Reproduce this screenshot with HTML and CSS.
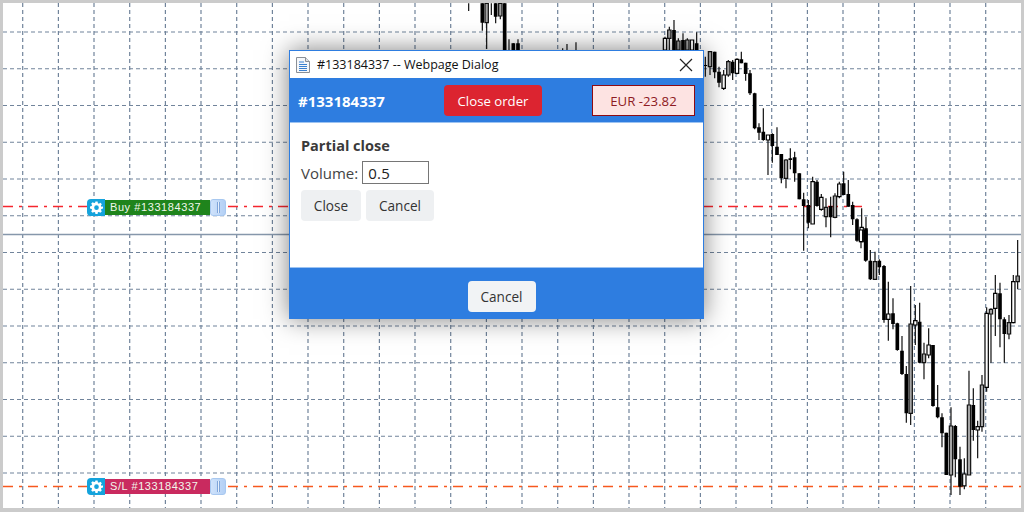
FILE: index.html
```html
<!DOCTYPE html>
<html lang="en">
<head>
<meta charset="utf-8">
<title>#133184337 -- Webpage Dialog</title>
<link rel="stylesheet" href="styles.css">
</head>
<body>
<div class="screen">
  <svg class="chart" viewBox="0 0 1024 512" width="1024" height="512" aria-hidden="true">
    <path class="grid" d="M3 32H1024M3 68.75H1024M3 105.5H1024M3 142.25H1024M3 179H1024M3 215.75H1024M3 252.5H1024M3 289.25H1024M3 326H1024M3 362.75H1024M3 399.5H1024M3 436.25H1024M3 473H1024"/>
    <path class="grid" d="M22.7 3V512M58.4 3V512M94 3V512M129.7 3V512M165.4 3V512M201 3V512M236.7 3V512M272.4 3V512M308 3V512M343.7 3V512M379.4 3V512M415 3V512M450.7 3V512M486.4 3V512M522 3V512M557.7 3V512M593.4 3V512M629 3V512M664.7 3V512M700.4 3V512M736 3V512M771.7 3V512M807.4 3V512M843 3V512M878.7 3V512M914.4 3V512M950 3V512M985.7 3V512"/>
    <path class="level-gray" d="M3 234.500H1024"/>
    <path class="level-red" d="M3 206.500H862"/>
    <path class="level-orange" d="M3 486.500H1024"/>

    <g transform="translate(460 0) scale(.3333)">
      <path class="wick" d="M26 10V33M67 10V92M80 10V147M94 10V45M107 10V70M121 10V58M134 10V147M147 118V150M160 130V150M174 118V150M308 145V150M321 132V150M348 127V150"/>
      <path class="body-black" d="M67 10V68M107 10V50M134 10V150M160 130V150M174 130V150"/>
      <path class="body-gray" d="M75 10h10v58h-10zM116 10h10v38h-10z"/>
    </g>
    <g transform="translate(650 15) scale(.3333)">
      <path class="wick" d="M45 65V105M58 35V105M72 15V105M85 70V105M99 55V105M112 70V105M126 75V105M140 52V105"/>
      <path class="body-black" d="M72 45V105M99 75V105M140 85V105"/>
      <path class="body-white" d="M40 70h10v35h-10zM121 75h10v30h-10z"/>
      <path class="body-gray" d="M53 45h10v25h-10zM80 78h10v27h-10zM107 75h10v30h-10z"/>
    </g>
    <g transform="translate(700 40) scale(.3333)">
      <path class="wick" d="M16 50V110M30 35V105M44 35V115M57 80V142M71 90V150M85 60V110M98 60V120M111 55V103M124 35V70M137 68V122M150 90V165M164 158V268M177 250V300M190 205V302M204 285V405M217 280V368M231 262V345M244 342V430M258 358V445M271 325V388M284 335V425M298 400V478M311 458V632M325 480V565M338 410V552M351 420V500M364 462V512M378 475V562M392 470V592M405 460V535M418 425V475M431 395V465M445 420V500M458 485V555M471 535V605M485 505V605M498 530V660"/>
      <path class="body-black" d="M16 75V78M44 35V97M57 95V128M98 65V100M124 58V70M137 68V102M150 100V160M164 160V265M177 262V278M190 275V300M217 282V318M231 320V345M244 342V415M271 355V360M284 352V400M298 400V478M311 478V498M325 495V548M351 425V498M392 498V532M431 430V465M445 462V500M458 495V538M471 538V602M498 565V660"/>
      <path class="body-white" d="M66 105h10v40h-10zM106 58h10v42h-10zM199 285h10v15h-10zM333 425h10v127h-10zM359 472h10v36h-10zM413 432h10v38h-10zM480 562h10v43h-10z"/>
      <path class="body-gray" d="M25 35h10v45h-10zM80 65h10v40h-10zM253 360h10v55h-10zM373 502h10v28h-10zM400 468h10v64h-10z"/>
    </g>
    <g transform="translate(860 230) scale(.3333)">
      <path class="wick" d="M3 0V55M17 0V95M31 60V150M45 65V150M58 88V135M72 105V278M85 155V332M99 205V298M112 278V362M126 318V435M139 408V578M152 168V585M166 225V345M179 218V400M192 338V448M206 295V385M219 345V530M233 465V565M246 550V652M259 608V735M273 532V795M286 585V742M300 650V795M313 685V778M327 422V735M340 475V632M353 572V685M366 435V605M380 232V485M393 235V398M406 135V318M420 158V352M433 262V398M447 255V328M460 135V280M473 30V178"/>
      <path class="body-black" d="M17 0V92M31 92V148M58 92V112M72 108V270M99 250V282M112 280V360M126 362V432M139 432V550M179 275V398M219 345V528M233 532V562M246 562V610M259 608V735M286 588V688M300 688V770M340 525V600M420 190V268M433 268V312"/>
      <path class="body-white" d="M-2 0h10v35h-10zM80 252h10v16h-10zM161 272h10v13h-10zM201 345h10v30h-10zM308 732h10v36h-10zM348 590h10v10h-10zM375 250h10v222h-10zM401 190h10v45h-10zM455 155h10v123h-10z"/>
      <path class="body-gray" d="M40 95h10v53h-10zM147 282h10v268h-10zM187 372h10v26h-10zM268 588h10v147h-10zM322 525h10v210h-10zM361 465h10v125h-10zM388 238h10v14h-10zM442 278h10v34h-10zM468 138h10v17h-10z"/>
    </g>
  </svg>

  <div class="tag tag-buy">
    <span class="tag-gear">
      <svg viewBox="0 0 24 24" width="13" height="13" aria-hidden="true"><path class="gear" fill-rule="evenodd" d="M10 1h4l.6 3.1 1.9.8 2.6-1.8 2.8 2.8-1.8 2.6.8 1.9L24 10v4l-3.1.6-.8 1.9 1.8 2.6-2.8 2.8-2.6-1.8-1.9.8L14 24h-4l-.6-3.1-1.9-.8-2.6 1.8-2.8-2.8 1.8-2.6-.8-1.9L0 14v-4l3.1-.6.8-1.9L2.100 4.900l2.800-2.800 2.600 1.800 1.900-.8zM12 8a4.300 4.300 0 1 0 0 8.600A4.300 4.300 0 0 0 12 8z"/></svg>
    </span>
    <span class="tag-label">Buy #133184337</span>
    <span class="tag-handle"><i></i></span>
  </div>

  <div class="tag tag-sl">
    <span class="tag-gear">
      <svg viewBox="0 0 24 24" width="13" height="13" aria-hidden="true"><path class="gear" fill-rule="evenodd" d="M10 1h4l.6 3.1 1.9.8 2.6-1.8 2.8 2.8-1.8 2.6.8 1.9L24 10v4l-3.1.6-.8 1.9 1.8 2.6-2.8 2.8-2.6-1.8-1.9.8L14 24h-4l-.6-3.1-1.9-.8-2.6 1.8-2.8-2.8 1.8-2.6-.8-1.9L0 14v-4l3.1-.6.8-1.9L2.100 4.900l2.800-2.800 2.600 1.800 1.900-.8zM12 8a4.300 4.300 0 1 0 0 8.600A4.300 4.300 0 0 0 12 8z"/></svg>
    </span>
    <span class="tag-label">S/L #133184337</span>
    <span class="tag-handle"><i></i></span>
  </div>

  <section class="dialog">
    <div class="titlebar">
      <svg class="doc-icon" viewBox="0 0 16 18" width="16" height="18" aria-hidden="true">
        <path class="doc-sheet" d="M1.500 1.500h9l4 4v11h-13z"/>
        <path class="doc-fold" d="M10.500 1.500v4h4"/>
        <path class="doc-lines" d="M4 6h5M4 8.500h8M4 10.500h8M4 12.500h8M4 14.500h8"/>
      </svg>
      <span class="title-text">#133184337 -- Webpage Dialog</span>
      <svg class="close-x" viewBox="0 0 14 14" width="14" height="14" aria-hidden="true"><path d="M1 1L13 13M13 1L1 13"/></svg>
    </div>
    <header class="head">
      <strong class="ticket">#133184337</strong>
      <button class="btn-danger">Close order</button>
      <span class="profit">EUR -23.82</span>
    </header>
    <div class="content">
      <h2 class="section-title">Partial close</h2>
      <div class="field">
        <label class="field-label" for="vol">Volume:</label>
        <input class="field-input" id="vol" value="0.5">
      </div>
      <div class="actions">
        <button class="btn-light btn-close">Close</button>
        <button class="btn-light btn-cancel">Cancel</button>
      </div>
    </div>
    <footer class="foot">
      <button class="btn-foot">Cancel</button>
    </footer>
  </section>
</div>
</body>
</html>
```
FILE: styles.css
```css
* { box-sizing: border-box; }
html, body { margin: 0; padding: 0; }
body { width: 1024px; height: 512px; overflow: hidden; background: #fff; font-family: "Open Sans", "Liberation Sans", sans-serif; }

.screen { position: relative; width: 1024px; height: 512px; border: solid #cbcbcb; border-width: 3px 3px 4px 3px; overflow: hidden; background: #fff; }
.chart { position: absolute; left: -3px; top: -3px; display: block; }

.grid { fill: none; stroke: #71849b; stroke-width: 1.2; stroke-dasharray: 4 3; }
.level-gray { fill: none; stroke: #8697ab; stroke-width: 1.5; }
.level-red { fill: none; stroke: #f5262e; stroke-width: 1.6; stroke-dasharray: 10 6 3 6; }
.level-orange { fill: none; stroke: #f7581e; stroke-width: 1.6; stroke-dasharray: 10 6 3 6; }
.wick { fill: none; stroke: #111; stroke-width: 3.6; }
.body-black { fill: none; stroke: #000; stroke-width: 11; }
.body-white { fill: #fff; stroke: #000; stroke-width: 3.6; }
.body-gray { fill: #a4a4a4; stroke: #111; stroke-width: 3.6; }

.tag { position: absolute; left: 84px; display: flex; height: 17px; width: 139px; font-family: "Liberation Sans", sans-serif; font-size: 11px; line-height: 15px; color: #f2f7ec; }
.tag-buy { top: 196px; }
.tag-sl { top: 475px; }
.tag-gear { flex: 0 0 18px; display: flex; align-items: center; justify-content: center; background: #14a3dc; border-radius: 4px 0 0 4px; }
.gear { fill: #fff; }
.tag-label { flex: 0 0 105px; margin: 1px 0; padding-left: 5px; letter-spacing: .58px; white-space: nowrap; }
.tag-buy .tag-label { background: #1f841c; }
.tag-sl .tag-label { background: #c92a5f; }
.tag-handle { flex: 1; display: flex; align-items: center; justify-content: center; background: linear-gradient(90deg, #cfe2fb, #b3d0f5); border: 1px solid #a8c8f0; border-radius: 3px; }
.tag-handle i { display: block; width: 3px; height: 11px; background: #e6f0fd; border: solid #7fa5da; border-width: 0 1px; }

.dialog { position: absolute; left: 286px; top: 47px; width: 415px; height: 269px; display: flex; flex-direction: column; border: 1px solid #2e7de0; background: #fff; box-shadow: 0 0 24px rgba(0, 0, 0, .5); }

.titlebar { flex: 0 0 27px; display: flex; align-items: center; padding: 0 10px 0 5px; background: #fff; }
.doc-icon { flex: none; margin-right: 6px; }
.doc-sheet { fill: #f5f7fa; stroke: #8a8f96; stroke-width: 1; }
.doc-fold { fill: #dfe3e8; stroke: #8a8f96; stroke-width: 1; }
.doc-lines { fill: none; stroke: #3a80d0; stroke-width: 1; }
.title-text { flex: 1; font-size: 12.5px; letter-spacing: 0; color: #111; white-space: nowrap; }
.close-x { flex: none; }
.close-x path { fill: none; stroke: #222; stroke-width: 1.2; }

.head { flex: 0 0 45px; display: flex; align-items: center; padding: 1px 8px 0 8px; background: #2e7de0; border-bottom: 1px solid #9cc3f2; }
.ticket { flex: 0 0 146px; font-size: 15px; font-weight: 700; color: #fff; white-space: nowrap; }
.btn-danger { flex: 0 0 98px; height: 31px; padding: 0; border: 0; border-radius: 4px; background: #dc2430; color: #fff; font: 400 13.2px "Open Sans", sans-serif; }
.profit { flex: 0 0 103px; height: 31px; margin-left: auto; display: flex; align-items: center; justify-content: center; background: #fde3e2; border: 1px solid #8e0a12; color: #8e1a22; font-size: 13.2px; }

.content { flex: 0 0 144px; padding: 13px 11px 0; background: #fff; }
.section-title { margin: 0 0 5px; font-size: 14.5px; line-height: 20px; font-weight: 700; color: #3a3a3a; }
.field { display: flex; align-items: center; height: 23px; margin-bottom: 6px; }
.field-label { margin-right: 4px; font-size: 15px; color: #444; }
.field-input { width: 67px; height: 23px; padding: 0 5px; border: 1px solid #767676; border-radius: 0; outline: 0; font: 400 15px "Open Sans", sans-serif; letter-spacing: .3px; color: #222; }
.actions { display: flex; gap: 5px; }
.btn-light { height: 31px; padding: 0; border: 0; border-radius: 4px; background: #eef0f2; color: #333; font: 400 13.6px "Open Sans", sans-serif; }
.btn-close { width: 60px; }
.btn-cancel { width: 68px; }

.foot { flex: 1; display: flex; justify-content: center; align-items: flex-start; padding: 13px 0 0 10px; background: #2e7de0; border-top: 1px solid #9cc3f2; }
.btn-foot { width: 68px; height: 31px; padding: 0; border: 0; border-radius: 4px; background: #f1f3f5; color: #333; font: 400 13.6px "Open Sans", sans-serif; }
```
